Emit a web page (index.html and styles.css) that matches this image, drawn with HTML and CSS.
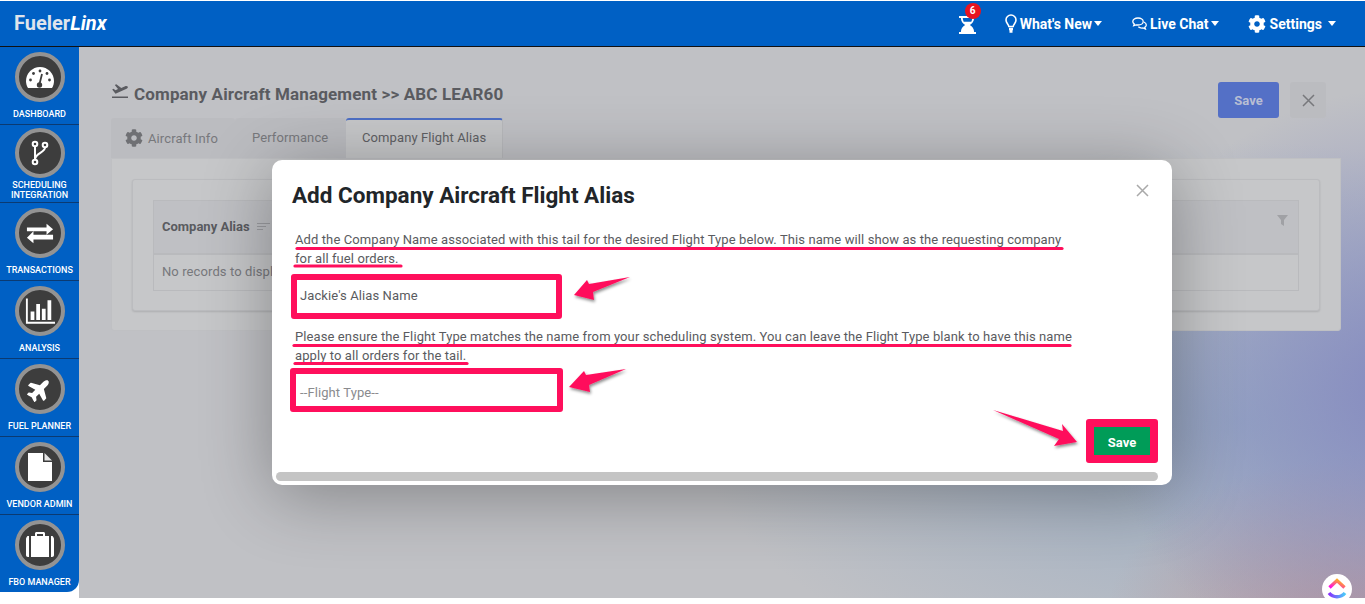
FILE: index.html
```html
<!DOCTYPE html>
<html lang="en">
<head>
    <meta charset="UTF-8">
    <meta name="viewport" content="width=device-width, initial-scale=1.0">
    <title>Company Aircraft Management</title>
    <link rel="stylesheet" href="styles.css">
</head>
<body>
    <svg class="icon-defs" width="0" height="0">
        <symbol id="cog" viewBox="0 0 512 512">
            <path d="M487.4 315.7l-42.6-24.6c4.3-23.2 4.3-47 0-70.2l42.6-24.6c4.9-2.8 7.1-8.6 5.5-14-11.1-35.6-30-67.8-54.7-94.6-3.8-4.1-10-5.1-14.8-2.3L380.8 110c-17.9-15.4-38.5-27.3-60.8-35.1V25.8c0-5.6-3.9-10.5-9.4-11.7-36.7-8.2-74.3-7.8-109.2 0-5.5 1.2-9.4 6.1-9.4 11.7V75c-22.2 7.9-42.8 19.8-60.8 35.1L88.7 85.5c-4.9-2.8-11-1.9-14.8 2.3-24.7 26.7-43.6 58.9-54.7 94.6-1.7 5.4.6 11.2 5.5 14L67.3 221c-4.3 23.2-4.3 47 0 70.2l-42.6 24.6c-4.9 2.8-7.1 8.6-5.5 14 11.1 35.6 30 67.8 54.7 94.6 3.8 4.1 10 5.1 14.8 2.3l42.6-24.6c17.9 15.4 38.5 27.3 60.8 35.1v49.2c0 5.6 3.9 10.5 9.4 11.7 36.7 8.2 74.3 7.8 109.2 0 5.5-1.2 9.4-6.1 9.4-11.7v-49.2c22.2-7.9 42.8-19.8 60.8-35.1l42.6 24.6c4.9 2.8 11 1.9 14.8-2.3 24.7-26.7 43.6-58.9 54.7-94.6 1.5-5.5-.7-11.3-5.6-14.1zM256 336c-44.1 0-80-35.9-80-80s35.9-80 80-80 80 35.9 80 80-35.9 80-80 80z"/>
        </symbol>
    </svg>

    <header class="topbar">
        <div class="logo">Fueler<em>Linx</em></div>
        <nav class="topnav">
            <a class="nav-timer">
                <svg width="17" height="20" viewBox="0 0 18 19">
                    <path fill="#fff" d="M0 0h18v2h-2c0 3.500-2 6-4.500 7.500C14 11 16 13.500 16 17h2v2H0v-2h2c0-3.500 2-6 4.500-7.500C4 8 2 5.500 2 2H0z"/>
                    <path fill="#0060c4" d="M4 2h10c0 1.500-.4 2.800-1 4H5C4.400 4.800 4 3.500 4 2z"/>
                </svg>
                <span class="nav-badge">6</span>
            </a>
            <a class="nav-link nav-whatsnew">
                <svg width="12" height="19" viewBox="0 0 12 19" fill="none" stroke="#fff" stroke-width="1.600">
                    <path d="M3.800 12.500C3.500 10 1 9 1 6a5 5 0 0 1 10 0c0 3-2.500 4-2.800 6.500z"/>
                    <path stroke-width="2.500" d="M4 15h4M4.500 17.500h3"/>
                </svg>
                What's New<i class="caret"></i>
            </a>
            <a class="nav-link nav-chat">
                <svg width="15" height="13" viewBox="0 0 15 13" fill="none" stroke="#fff" stroke-width="1.300">
                    <path d="M6 1C3 1 .8 2.500.8 4.500c0 1 .6 1.900 1.500 2.500l-.6 1.700L4 7.800c.6.100 1.300.2 2 .2 3 0 5.200-1.500 5.200-3.500S9 1 6 1z"/>
                    <path d="M11.800 5c1.500.6 2.500 1.700 2.500 2.900 0 1-.6 1.800-1.500 2.400l.6 1.700-2.300-1c-1.800.3-3.700-.2-4.800-1.200"/>
                </svg>
                Live Chat<i class="caret"></i>
            </a>
            <a class="nav-link nav-settings">
                <svg width="18" height="18"><use href="#cog" fill="#fff"/></svg>
                Settings<i class="caret"></i>
            </a>
        </nav>
    </header>

    <div class="layout">
        <aside class="sidebar">
            <a class="side-item">
                <span class="side-icon">
                    <svg width="28" height="21" viewBox="0 0 28 21">
                        <path fill="#fff" d="M14 0C6.300 0 0 6.300 0 14c0 2.500.7 5 2 7h24c1.300-2 2-4.500 2-7C28 6.300 21.700 0 14 0z"/>
                        <circle cx="4.500" cy="13" r="1.400" fill="#3d3d3d"/><circle cx="7.500" cy="6.500" r="1.400" fill="#3d3d3d"/>
                        <circle cx="14" cy="4" r="1.400" fill="#3d3d3d"/><circle cx="21" cy="6.500" r="1.400" fill="#3d3d3d"/>
                        <circle cx="23.500" cy="13" r="1.400" fill="#3d3d3d"/>
                        <path stroke="#3d3d3d" stroke-width="1.800" d="M13.500 17l2.500-10"/><circle cx="13.500" cy="18" r="2.700" fill="#3d3d3d"/>
                    </svg>
                </span>
                <span class="side-label">DASHBOARD</span>
            </a>
            <a class="side-item side-item-two">
                <span class="side-icon">
                    <svg width="18" height="26" viewBox="0 0 18 26" fill="none" stroke="#fff" stroke-width="2">
                        <circle cx="4" cy="4" r="2.300"/><circle cx="14" cy="5" r="2.300"/><circle cx="4" cy="22" r="2.300"/>
                        <path d="M4 6.500v13M14 7.500c0 5-10 6-10 12"/>
                    </svg>
                </span>
                <span class="side-label">SCHEDULING INTEGRATION</span>
            </a>
            <a class="side-item">
                <span class="side-icon">
                    <svg width="28" height="22" viewBox="0 0 30 22" fill="#fff">
                        <path d="M1 4h21V0l7 6-7 6V8H1zM29 12H8V8l-7 7 7 6v-4h21z" transform="translate(0 1)"/>
                    </svg>
                </span>
                <span class="side-label">TRANSACTIONS</span>
            </a>
            <a class="side-item">
                <span class="side-icon">
                    <svg width="30" height="27" viewBox="0 0 32 28" fill="#fff">
                        <path d="M1 0h2v25h29v2H1z"/>
                        <path d="M6 14h4v9H6zM12 6h4v17h-4zM18 11h4v12h-4zM24 2h4v21h-4z"/>
                    </svg>
                </span>
                <span class="side-label">ANALYSIS</span>
            </a>
            <a class="side-item">
                <span class="side-icon">
                    <svg class="plane-icon" width="25" height="25" viewBox="0 0 576 512" fill="#fff">
                        <path d="M480 192H365.710L260.610 8.060A16.014 16.014 0 0 0 246.710 0h-65.500c-10.630 0-18.300 10.170-15.380 20.390L214.860 192H112l-43.200-57.600c-3.020-4.030-7.770-6.400-12.800-6.400H16.010C5.600 128-2.040 137.780.49 147.880L32 256 .49 364.120C-2.040 374.220 5.600 384 16.010 384H56c5.040 0 9.780-2.370 12.800-6.400L112 320h102.860l-49.030 171.600c-2.920 10.220 4.750 20.400 15.380 20.400h65.500c5.740 0 11.040-3.080 13.890-8.060L365.710 320H480c35.350 0 96-28.650 96-64s-60.650-64-96-64z"/>
                    </svg>
                </span>
                <span class="side-label">FUEL PLANNER</span>
            </a>
            <a class="side-item">
                <span class="side-icon">
                    <svg width="24" height="28" viewBox="0 0 24 28">
                        <path fill="#fff" d="M0 0h15v9h9v19H0z"/>
                        <path fill="#e4e4e4" d="M16.500 0L24 7.500h-7.500z"/>
                    </svg>
                </span>
                <span class="side-label">VENDOR ADMIN</span>
            </a>
            <a class="side-item">
                <span class="side-icon">
                    <svg width="28" height="26" viewBox="0 0 28 26" fill="#fff">
                        <path d="M9 4V1.500C9 .7 9.700 0 10.500 0h7c.8 0 1.500.7 1.500 1.500V4h-2V2h-6v2z"/>
                        <path d="M3 4H1.500C.7 5 0 6 0 7v16c0 1 .7 2 2 2h1zM5 4h18v21H5zM25 4v21h1c1.300 0 2-1 2-2V7c0-1-.7-2-1.500-3z"/>
                    </svg>
                </span>
                <span class="side-label">FBO MANAGER</span>
            </a>
        </aside>

        <main class="content">
            <div class="page-head">
                <h2 class="page-title">
                    <svg width="16" height="14" viewBox="0 0 16 14" fill="#5a5b60">
                        <path d="M0 12.500h16V14H0zM.2 5.500l1.300-.7L3.500 6.200 6 5 2.800.9 4.300.2l5 3.800 3.800-1.700c1-.4 2.300-.2 2.700.5.300.7-.2 1.400-1.200 1.900L3.500 9.800z"/>
                    </svg>
                    Company Aircraft Management &gt;&gt; ABC LEAR60
                </h2>
                <div class="page-actions">
                    <button class="btn-save">Save</button>
                    <button class="btn-close">
                        <svg width="13" height="13" viewBox="0 0 13 13" stroke="#77787c" stroke-width="1.500"><path d="M1 1l11 11M12 1L1 12"/></svg>
                    </button>
                </div>
            </div>

            <div class="tabs">
                <a class="tab tab-info">
                    <svg width="18" height="18"><use href="#cog" fill="#6f7074"/></svg>
                    Aircraft Info
                </a>
                <a class="tab tab-perf">Performance</a>
                <a class="tab tab-active">Company Flight Alias</a>
            </div>

            <section class="tab-panel">
                <div class="panel-card">
                    <div class="alias-grid">
                        <div class="grid-head">
                            <span class="grid-title">Company Alias</span>
                            <span class="sort-lines"><i></i><i></i><i></i></span>
                            <svg class="filter-icon" width="11" height="11" viewBox="0 0 11 11" fill="#a0a1a5"><path d="M0 0h11L7 5v6L4 9V5z"/></svg>
                        </div>
                        <div class="grid-row">No records to display</div>
                    </div>
                </div>
            </section>
        </main>
    </div>

    <div class="modal">
        <div class="modal-head">
            <h1 class="modal-title">Add Company Aircraft Flight Alias</h1>
            <svg class="modal-close" width="13" height="13" viewBox="0 0 13 13" stroke="#a9a9a9" stroke-width="1.500"><path d="M1 1l11 11M12 1L1 12"/></svg>
        </div>
        <div class="modal-body">
            <p class="help-text">Add the Company Name associated with this tail for the desired Flight Type below. This name will show as the requesting company for all fuel orders.</p>
            <div class="marked-input">Jackie's Alias Name</div>
            <p class="help-text help-second">Please ensure the Flight Type matches the name from your scheduling system. You can leave the Flight Type blank to have this name apply to all orders for the tail.</p>
            <div class="marked-input flight-type">--Flight Type--</div>
            <div class="modal-foot">
                <button class="btn-green">Save</button>
            </div>
        </div>
        <div class="scroll-thumb"></div>

        <!-- pink markup drawn on top of the dialog, page coordinates -->
        <svg class="markup" width="900" height="325" viewBox="272 160 900 325">
            <defs>
                <filter id="arrow-shadow" x="-20%" y="-20%" width="140%" height="160%">
                    <feDropShadow dx="1" dy="2" stdDeviation="1.500" flood-color="#000" flood-opacity=".45"/>
                </filter>
            </defs>
            <g fill="none" stroke="#ff0f5c" stroke-width="3.200" stroke-linecap="round">
                <path d="M297 248.500H1062"/>
                <path d="M295 266H401"/>
                <path d="M294 345.500H1070"/>
                <path d="M295 363.500H467"/>
            </g>
            <g fill="#ff0f5c" filter="url(#arrow-shadow)">
                <path d="M574 295L587 280 589 284 630 277 593 292 594 300z"/>
                <path d="M569 387L584 371 586 375 626 369 589 385 590 392z"/>
                <path d="M993 410L1063 431 1062 424 1077 442 1054 446 1059 439z"/>
            </g>
        </svg>
    </div>

    <div class="helper-badge">
        <svg width="20" height="24" viewBox="0 0 20 24" fill="none" stroke-width="3.400">
            <defs>
                <linearGradient id="cu-top" x1="0" y1="1" x2="1" y2="0"><stop offset="0" stop-color="#ff02f0"/><stop offset="1" stop-color="#ffc800"/></linearGradient>
                <linearGradient id="cu-low" x1="0" y1="0" x2="1" y2="0"><stop offset="0" stop-color="#8930fd"/><stop offset="1" stop-color="#49ccf9"/></linearGradient>
            </defs>
            <path stroke="url(#cu-top)" d="M2.500 10.500L10 3.500l7.500 7"/>
            <path stroke="url(#cu-low)" d="M2 16c4 5 12 5 16 0"/>
        </svg>
    </div>
</body>
</html>
```

FILE: styles.css
```css
* {
    margin: 0;
    padding: 0;
    box-sizing: border-box;
}

body {
    font-family: Roboto, "Liberation Sans", sans-serif;
    background: #fff;
    width: 1365px;
    height: 604px;
    overflow: hidden;
    position: relative;
}

.icon-defs {
    position: absolute;
}

/* top bar */
.topbar {
    height: 46px;
    margin-top: 1px;
    background: #0060c4;
    border-bottom: 1px solid #111;
    display: flex;
    align-items: center;
    justify-content: space-between;
    padding: 0 29px 0 14px;
    color: #fff;
}

.logo {
    font-size: 20px;
    font-weight: 700;
    color: #dfe4ec;
    margin-top: -1px;
}

.logo em {
    color: #fff;
}

.topnav {
    display: flex;
    align-items: center;
}

.nav-timer {
    position: relative;
    display: flex;
    margin-right: 29px;
    margin-top: 2px;
}

.nav-badge {
    position: absolute;
    top: -12px;
    left: 6px;
    width: 16px;
    height: 16px;
    border-radius: 50%;
    background: #e8131f;
    color: #fff;
    font-size: 10px;
    font-weight: 700;
    text-align: center;
    line-height: 16px;
}

.nav-link {
    display: flex;
    align-items: center;
    gap: 3px;
    font-size: 14px;
    font-weight: 700;
}

.nav-whatsnew {
    margin-right: 30px;
}

.nav-chat {
    margin-right: 29px;
}

.caret {
    width: 0;
    height: 0;
    border-left: 4.500px solid transparent;
    border-right: 4.500px solid transparent;
    border-top: 5px solid #fff;
    margin-left: -1px;
}

.nav-settings svg {
    margin-right: 1px;
}

.nav-settings .caret {
    margin-left: 3px;
}

/* sidebar + page */
.layout {
    display: flex;
    height: 551px;
}

.sidebar {
    width: 79px;
    height: 545px;
    flex-shrink: 0;
    background: #0060c4;
    border-bottom-right-radius: 12px;
    overflow: hidden;
}

.side-item {
    height: 78px;
    padding-top: 5px;
    display: flex;
    flex-direction: column;
    align-items: center;
    border-bottom: 1px solid #0b3a72;
}

.side-item-two {
    padding-top: 3px;
}

.side-item:last-child {
    border-bottom: 0;
}

.side-icon {
    width: 50px;
    height: 50px;
    flex-shrink: 0;
    border-radius: 50%;
    background: #3d3d3d;
    border: 4px solid #939393;
    display: flex;
    align-items: center;
    justify-content: center;
}

.plane-icon {
    transform: rotate(-45deg);
}

.side-label {
    color: #fff;
    font-size: 9px;
    font-weight: 500;
    line-height: 10px;
    text-align: center;
    margin-top: 7px;
}

.side-item-two .side-label {
    margin-top: 2px;
}

.content {
    flex: 1;
    padding: 29px 24px 0 32px;
    background:
        radial-gradient(ellipse 300px 300px at 103% 62%, rgba(132,137,192,.95), rgba(132,137,192,0) 100%),
        radial-gradient(ellipse 260px 170px at 100% 105%, rgba(185,150,155,1), rgba(185,150,155,0) 100%),
        radial-gradient(ellipse 540px 280px at 90% 68%, rgba(150,170,195,.9), rgba(150,170,195,0) 100%),
        #c0c1c5;
}

.page-head {
    display: flex;
    justify-content: space-between;
    align-items: flex-start;
    height: 42px;
}

.page-title {
    font-size: 17px;
    font-weight: 700;
    letter-spacing: .15px;
    color: #5a5b60;
    display: flex;
    align-items: center;
    gap: 6px;
    margin: 7px 0 0 1px;
    line-height: 22px;
}

.page-title svg {
    margin-top: -6px;
}

.page-actions {
    display: flex;
    gap: 11px;
    margin-top: 6px;
    margin-right: 15px;
}

.btn-save {
    width: 61px;
    height: 36px;
    border: 0;
    border-radius: 3px;
    background: #5470c6;
    color: #b8bed3;
    font-family: inherit;
    font-size: 13px;
    font-weight: 700;
}

.btn-close {
    width: 36px;
    height: 36px;
    border: 0;
    border-radius: 3px;
    background: #bbbcc0;
    display: flex;
    align-items: center;
    justify-content: center;
}

/* tabs */
.tabs {
    display: flex;
    height: 40px;
}

.tab {
    display: flex;
    align-items: center;
    height: 40px;
    background: #bbbcc0;
    border-top-left-radius: 3px;
    border-top-right-radius: 3px;
    color: #77787c;
    font-size: 13px;
    letter-spacing: .1px;
}

.tab-info {
    width: 124px;
    padding-left: 14px;
    gap: 5px;
}

.tab-perf {
    width: 111px;
    padding-left: 17px;
    padding-bottom: 2px;
}

.tab-active {
    width: 157px;
    padding-left: 16px;
    padding-bottom: 3px;
    background: #c6c7c9;
    color: #5f6064;
    border-top: 2px solid #4d6fc4;
    border-right: 1px solid #b8b9bc;
}

.tab-panel {
    width: 1230px;
    height: 173px;
    padding: 20px;
    background: #c6c7c9;
    border: 1px solid #bfc0c3;
    border-radius: 0 0 3px 3px;
}

.panel-card {
    height: 132px;
    padding: 20px;
    background: #c6c7c9;
    border: 1px solid #bbbcbf;
    border-radius: 3px;
    box-shadow: 0 1px 2px rgba(0,0,0,.12);
}

.alias-grid {
    border: 1px solid #b9babd;
    height: 91px;
}

.grid-head {
    height: 54px;
    background: #bfc0c4;
    border-bottom: 2px solid #b9babd;
    display: flex;
    align-items: center;
    padding: 0 10px 2px 8px;
    color: #5a5b60;
    font-size: 13px;
    font-weight: 700;
}

.sort-lines {
    margin-left: 7px;
    display: flex;
    flex-direction: column;
    gap: 2px;
}

.sort-lines i {
    display: block;
    height: 1px;
    width: 13px;
    background: #9c9da1;
}

.sort-lines i:nth-child(2) {
    width: 9px;
}

.sort-lines i:nth-child(3) {
    width: 6px;
}

.filter-icon {
    margin-left: auto;
    margin-top: -12px;
}

.grid-row {
    padding: 9px 8px;
    color: #77787c;
    font-size: 13px;
    letter-spacing: .1px;
}

/* dialog */
.modal {
    position: absolute;
    left: 272px;
    top: 160px;
    width: 900px;
    height: 325px;
    background: #fff;
    border-radius: 10px;
    box-shadow: 0 10px 70px rgba(0,0,0,.32);
    display: flex;
    flex-direction: column;
}

.modal-head {
    height: 70px;
    display: flex;
    justify-content: space-between;
    padding: 21px 23px 0 20px;
}

.modal-title {
    font-size: 22.500px;
    font-weight: 700;
    color: #212529;
    line-height: 28px;
}

.modal-close {
    margin-top: 3px;
}

.modal-body {
    flex: 1;
    padding: 0 14px 0 19px;
    position: relative;
}

.help-text {
    width: 780px;
    margin-left: 4px;
    color: #5a5b60;
    font-size: 13px;
    line-height: 19px;
    letter-spacing: .1px;
}

.help-second {
    margin-top: 8px;
}

.marked-input {
    width: 271px;
    height: 45px;
    margin-top: 6px;
    border: 6px solid #ff0f5c;
    border-radius: 3px;
    padding-left: 3px;
    color: #5a5b60;
    font-size: 13px;
    letter-spacing: .1px;
    line-height: 32px;
}

.flight-type {
    width: 273px;
    height: 44px;
    margin-left: -1px;
    margin-top: 3px;
    padding-left: 4px;
    color: #8a8b8e;
    line-height: 38px;
}

.modal-foot {
    display: flex;
    justify-content: flex-end;
    margin-top: 7px;
}

.btn-green {
    width: 72px;
    height: 44px;
    border: 8px solid #ff0f5c;
    border-radius: 3px;
    background: #009c58;
    background-clip: padding-box;
    padding-top: 2px;
    color: #fff;
    font-family: inherit;
    font-size: 13px;
    font-weight: 700;
}

.scroll-thumb {
    height: 9px;
    margin: 0 14px 4px 4px;
    border-radius: 5px;
    background: #c4c4c4;
}

.markup {
    position: absolute;
    left: 0;
    top: 0;
    pointer-events: none;
}

.helper-badge {
    position: absolute;
    left: 1322px;
    top: 574px;
    width: 30px;
    height: 30px;
    border-radius: 50%;
    background: #fff;
    display: flex;
    align-items: center;
    justify-content: center;
}
```
